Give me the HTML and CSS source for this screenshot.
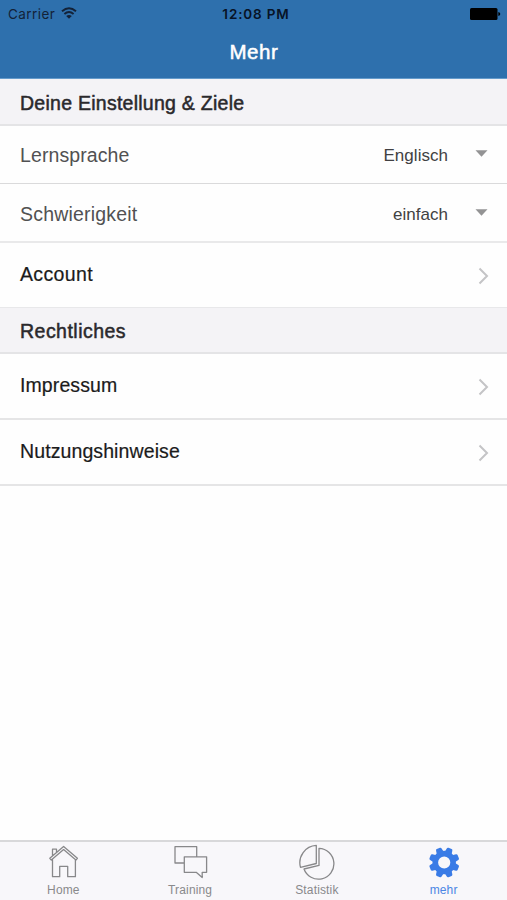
FILE: index.html
```html
<!DOCTYPE html>
<html lang="de">
<head>
<meta charset="utf-8">
<title>Mehr</title>
<link rel="stylesheet" href="styles.css">
</head>
<body>
<div class="app">
  <header class="header">
    <div class="status">
      <div class="carrier"><span>Carrier</span>
        <svg class="wifi" width="16" height="12" viewBox="0 0 16 12" fill="none" stroke="currentColor" stroke-width="1.9"><path d="M1 4.2Q8-1.8 15 4.2M3.4 7Q8 3.2 12.6 7"/><path d="M5.2 9.1Q8 7 10.8 9.1L8 11.7Z" fill="currentColor" stroke="none"/></svg>
      </div>
      <span class="time">12:08 PM</span>
      <svg class="battery" width="31" height="12" viewBox="0 0 31 12"><rect width="27.5" height="12" rx="1.5"/><path d="M28.3 4q2 .4 2 2t-2 2z"/></svg>
    </div>
    <h1 class="title"><span>Mehr</span></h1>
  </header>
  <main class="content">
    <h2 class="section section-goals"><span>Deine Einstellung &amp; Ziele</span></h2>
    <div class="row select"><span class="label language">Lernsprache</span><span class="value english">Englisch</span><svg class="caret" width="13" height="7" viewBox="0 0 13 7"><path d="M.5.3h12L6.5 6.8z"/></svg></div>
    <div class="row select"><span class="label difficulty">Schwierigkeit</span><span class="value easy">einfach</span><svg class="caret" width="13" height="7" viewBox="0 0 13 7"><path d="M.5.3h12L6.5 6.8z"/></svg></div>
    <div class="row link account"><span class="label">Account</span><svg class="chevron" width="11" height="18" viewBox="0 0 11 18"><path d="M1.5 1.5 9 9l-7.5 7.5"/></svg></div>
    <h2 class="section section-legal"><span>Rechtliches</span></h2>
    <div class="row link"><span class="label imprint">Impressum</span><svg class="chevron" width="11" height="18" viewBox="0 0 11 18"><path d="M1.5 1.5 9 9l-7.5 7.5"/></svg></div>
    <div class="row link"><span class="label terms">Nutzungshinweise</span><svg class="chevron" width="11" height="18" viewBox="0 0 11 18"><path d="M1.5 1.5 9 9l-7.5 7.5"/></svg></div>
  </main>
  <nav class="tabs">
    <div class="tab"><svg class="icon" width="40" height="38" viewBox="0 0 40 38"><path d="M6.8 16.3 20.6 4.5l13.8 11.8-1.5 1.7L20.6 7.6 8.3 18zM9.5 17.5v17.2h7.2V24.3h8v10.4h7.7V17.5M9.5 13.5V7.2h4v2.9"/></svg><span>Home</span></div>
    <div class="tab"><svg class="icon" width="40" height="38" viewBox="0 0 40 38"><path d="M14 21H5V4.7h21.7v10M14.3 14.8h22.3v15.5h-4.4v5.2l-6-5.2H14.3z"/></svg><span>Training</span></div>
    <div class="tab"><svg class="icon" width="40" height="38" viewBox="0 0 40 38"><path d="M19.3 3.4v18.1L3.5 25.3A17.3 17.3 0 0 1 19.3 3.4zM22 6.4A15.4 15.4 0 1 1 7 27l15-3.6z"/></svg><span>Statistik</span></div>
    <div class="tab active"><svg class="icon gear" width="40" height="38" viewBox="0 0 40 38"><circle cx="20.2" cy="20.5" r="8.9"/><g class="teeth"><path id="tooth" d="M16.3 11.5 17.2 6.5Q17.4 5.3 18.5 5.3h3.4Q23 5.3 23.2 6.5l.9 5z" transform="rotate(22.5 20.2 20.5)"/><use href="#tooth" transform="rotate(45 20.2 20.5)"/><use href="#tooth" transform="rotate(90 20.2 20.5)"/><use href="#tooth" transform="rotate(135 20.2 20.5)"/><use href="#tooth" transform="rotate(180 20.2 20.5)"/><use href="#tooth" transform="rotate(225 20.2 20.5)"/><use href="#tooth" transform="rotate(270 20.2 20.5)"/><use href="#tooth" transform="rotate(315 20.2 20.5)"/></g></svg><span>mehr</span></div>
  </nav>
</div>
</body>
</html>
```
FILE: styles.css
```css
* { box-sizing: border-box; }
body { margin: 0; font-family: "Liberation Sans", Arial, sans-serif; }
.app { width: 507px; height: 900px; display: flex; flex-direction: column; background: #fefefe; overflow: hidden; }
.header { height: 79px; background: #2e70ad; border-bottom: 1px solid #659bcb; }
.status { height: 27px; padding: 0 6px 0 8px; display: grid; grid-template-columns: 1fr auto 1fr; align-items: center; font-family: Inter, sans-serif; font-size: 13.5px; color: #132238; }
.carrier { display: flex; gap: 6px; align-items: center; letter-spacing: .45px; }
.wifi { margin-top: -2px; }
.time { font-weight: 600; letter-spacing: .85px; color: #071326; margin-left: 3px; white-space: nowrap; }
.battery { justify-self: end; fill: #000; }
.title { margin: 0; height: 50px; line-height: 49px; text-align: center; color: #fff; font-size: 20.5px; font-weight: 400; -webkit-text-stroke: .5px #fff; letter-spacing: .6px; padding-left: 1px; }
.section { margin: 0; height: 47px; padding: 3px 0 0 20px; display: flex; align-items: center; background: #f4f3f6; border-bottom: 2px solid #e4e4e6; color: #2a292c; font-size: 19.5px; font-weight: 400; -webkit-text-stroke: .5px #2a292c; letter-spacing: .26px; }
.section-legal { border-top: 1px solid #e8e8ea; letter-spacing: .48px; }
.row { padding: 0 18px 0 20px; display: flex; align-items: center; font-size: 19.5px; letter-spacing: .1px; }
.select { height: 58px; padding-top: 2px; border-bottom: 1px solid #dadadb; color: #515152; }
.select + .select { height: 59px; padding-top: 4px; border-bottom: 2px solid #e9e9ea; }
.difficulty { letter-spacing: .2px; }
.link { height: 66px; border-bottom: 2px solid #e5e5e6; color: #1b1b1b; }
.link .label { -webkit-text-stroke: .2px #1b1b1b; margin-top: -2px; }
.account { height: 64px; border-bottom: 0; letter-spacing: .35px; }
.label { flex: 1; }
.value { font-size: 17px; color: #414142; margin-right: 27px; letter-spacing: .03px; }
.caret { fill: #939394; margin-top: -4px; margin-right: 1px; }
.chevron { fill: none; stroke: #c4c4c6; stroke-width: 2; margin-top: 1px; }
.tabs { margin-top: auto; height: 60px; border-top: 2px solid #d8d8da; background: #f8f7fa; display: grid; grid-template-columns: repeat(4, 1fr); }
.tab { display: flex; flex-direction: column; align-items: center; color: #89898b; font-size: 12px; line-height: 14px; letter-spacing: .15px; }
.icon { fill: none; stroke: #88888a; stroke-width: 1.3; stroke-linejoin: round; margin-bottom: 3px; }
.gear { stroke: #397be6; stroke-width: 5.6; }
.teeth { fill: #397be6; stroke: none; }
.active { color: #4b86e4; }
```
